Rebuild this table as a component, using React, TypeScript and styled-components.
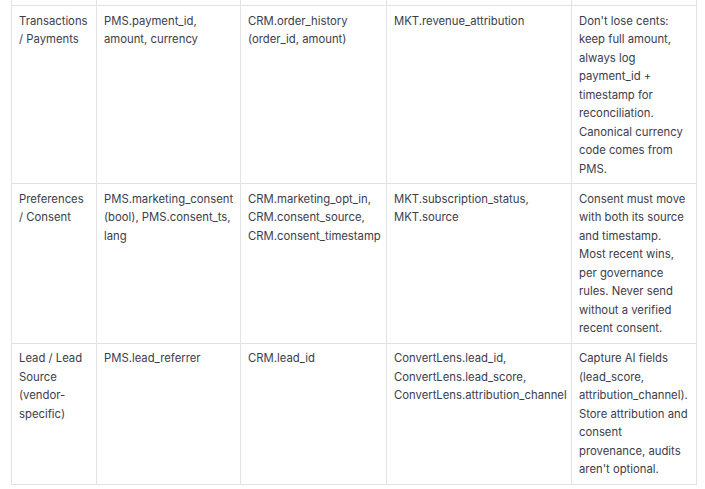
import React from 'react';
import styled, { createGlobalStyle } from 'styled-components';

const GlobalStyle = createGlobalStyle`
  html, body {
    margin: 0;
    padding: 0;
    background: #fff;
  }
`;

const Page = styled.div`
  padding: 0 10px 0 11px;
  font-family: 'Inter', 'Noto Sans', sans-serif;
`;

const Table = styled.table`
  width: 685px;
  border-collapse: collapse;
  table-layout: fixed;
  font-size: 11.3px;
  line-height: 18.5px;
  color: #3c3c4c;
`;

const Cell = styled.td`
  border: 1px solid #e2e2e2;
  padding: 5.5px 7px 5px 7px;
  vertical-align: top;
`;

const TailCell = styled.td`
  border: 1px solid #e2e2e2;
  border-top: none;
  height: 5px;
  padding: 0;
`;

const widths = [85, 144, 146, 185, 125];

const rows: string[][] = [
  [
    'Transactions / Payments',
    'PMS.payment_id, amount, currency',
    'CRM.order_history (order_id, amount)',
    'MKT.revenue_attribution',
    "Don't lose cents: keep full amount, always log payment_id + timestamp for reconciliation. Canonical currency code comes from PMS.",
  ],
  [
    'Preferences / Consent',
    'PMS.marketing_consent (bool), PMS.consent_ts, lang',
    'CRM.marketing_opt_in, CRM.consent_source, CRM.consent_timestamp',
    'MKT.subscription_status, MKT.source',
    'Consent must move with both its source and timestamp. Most recent wins, per governance rules. Never send without a verified recent consent.',
  ],
  [
    'Lead / Lead Source (vendor-specific)',
    'PMS.lead_referrer',
    'CRM.lead_id',
    'ConvertLens.lead_id, ConvertLens.lead_score, ConvertLens.attribution_channel',
    "Capture AI fields (lead_score, attribution_channel). Store attribution and consent provenance, audits aren't optional.",
  ],
];

const App: React.FC = () => {
  return (
    <>
      <GlobalStyle />
      <Page>
        <Table>
          <colgroup>
            {widths.map((w, i) => (
              <col key={i} style={{ width: w }} />
            ))}
          </colgroup>
          <tbody>
            <tr>
              {widths.map((_, i) => (
                <TailCell key={i} />
              ))}
            </tr>
            {rows.map((row, r) => (
              <tr key={r}>
                {row.map((text, c) => (
                  <Cell key={c}>{text}</Cell>
                ))}
              </tr>
            ))}
          </tbody>
        </Table>
      </Page>
    </>
  );
};

export default App;
